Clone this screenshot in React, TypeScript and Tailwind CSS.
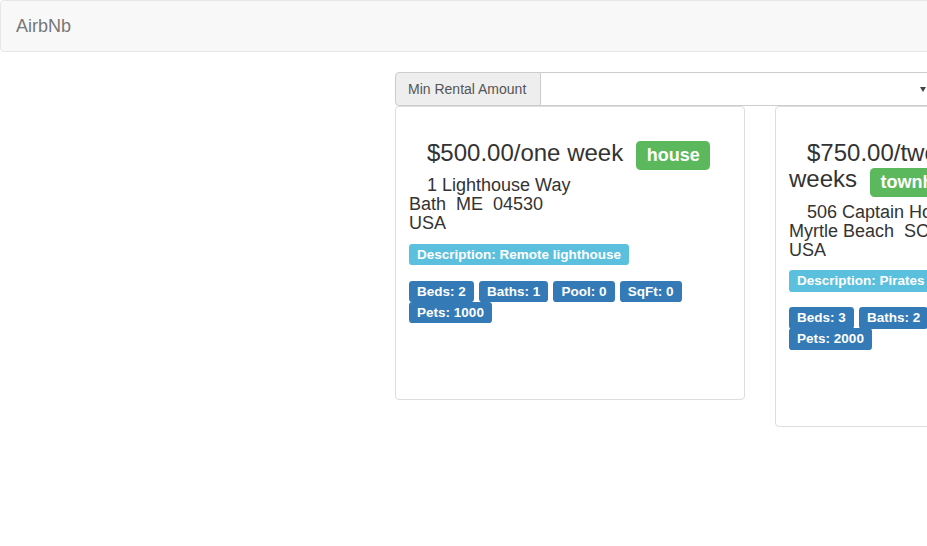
import React from "react"

type Rental = {
    price: string
    period: string[]
    kind: string
    street: string
    cityLine: string
    country: string
    description: string
    features: string[]
}

const rentals: Rental[] = [
    {
        price: "$500.00/one",
        period: ["week"],
        kind: "house",
        street: "1 Lighthouse Way",
        cityLine: "Bath\u00a0\u00a0ME\u00a0\u00a004530",
        country: "USA",
        description: "Description: Remote lighthouse",
        features: ["Beds: 2", "Baths: 1", "Pool: 0", "SqFt: 0", "Pets: 1000"]
    },
    {
        price: "$750.00/two",
        period: ["weeks"],
        kind: "townhouse",
        street: "506 Captain Hook Dr",
        cityLine: "Myrtle Beach\u00a0\u00a0SC\u00a0\u00a029577",
        country: "USA",
        description: "Description: Pirates cove",
        features: ["Beds: 3", "Baths: 2", "Pool: 1", "SqFt: 0", "Pets: 2000"]
    }
]

const labelClass =
    "inline text-[75%] font-bold leading-none text-white text-center whitespace-nowrap align-baseline rounded-[0.25em] px-[0.6em] pt-[0.2em] pb-[0.3em]"

const RentalCard = ({ rental }: { rental: Rental }) => {
    return (
        <div className="w-[350px] shrink-0 border border-[#ddd] rounded-[4px] px-[13px] pt-[13px] pb-[68px] bg-white">
            {/* Price + type */}
            <h3 className="mt-[20px] mb-[10px] text-[24px] leading-[1.1] font-normal indent-[18px]">
                {rental.price}{" "}
                <span className="whitespace-nowrap">
                    {rental.period.join(" ")}
                    {"\u00a0"}
                    <span className={`${labelClass} ml-[6px] bg-[#5cb85c]`}>{rental.kind}</span>
                </span>
            </h3>

            {/* Address */}
            <h4 className="mt-[10px] mb-[10px] text-[18px] leading-[19px] font-normal indent-[18px]">
                {rental.street}
                <br />
                {rental.cityLine}
                <br />
                {rental.country}
            </h4>

            <h4 className="mt-[8px] mb-0 text-[18px] leading-[1.1] font-normal">
                <span className={`${labelClass} bg-[#5bc0de]`}>{rental.description}</span>
            </h4>

            <h4 className="mt-[16px] mb-[10px] text-[18px] leading-[21px] font-normal">
                {rental.features.map((f, i) => (
                    <React.Fragment key={f}>
                        <span className={`${labelClass} bg-[#337ab7]`}>{f}</span>
                        {i < rental.features.length - 1 ? " " : ""}
                    </React.Fragment>
                ))}
            </h4>
        </div>
    )
}

const App = () => {
    return (
        <div className="w-[927px] h-[546px] overflow-hidden bg-white text-[14px] leading-[1.42857] text-[#333] font-['Liberation_Sans',Arial,sans-serif]">
            <div className="w-[1200px]">
                {/* Navbar */}
                <nav className="h-[52px] mb-[20px] flex items-center border border-[#e7e7e7] rounded-[4px] bg-[#f8f8f8]">
                    <span className="px-[15px] text-[18px] leading-[20px] text-[#777]">AirbNb</span>
                </nav>

                <div className="ml-[395px] w-[730px]">
                    {/* Filter */}
                    <div className="flex h-[34px] w-[542px]">
                        <span className="w-[146px] shrink-0 flex items-center pl-[12px] pt-[1px] whitespace-nowrap bg-[#eee] border border-[#ccc] rounded-l-[4px] text-[#555] text-[14px]">
                            Min Rental Amount
                        </span>
                        <div className="flex-1 flex items-center justify-end pr-[10px] border border-l-0 border-[#ccc] rounded-r-[4px] bg-white">
                            <svg width="6" height="5" viewBox="0 0 6 5">
                                <path d="M0 0 L6 0 L3 5 Z" fill="#444" />
                            </svg>
                        </div>
                    </div>

                    {/* Listings */}
                    <div className="flex items-start gap-[30px]">
                        {rentals.map(r => (
                            <RentalCard key={r.street} rental={r} />
                        ))}
                    </div>
                </div>
            </div>
        </div>
    )
}

export default App
